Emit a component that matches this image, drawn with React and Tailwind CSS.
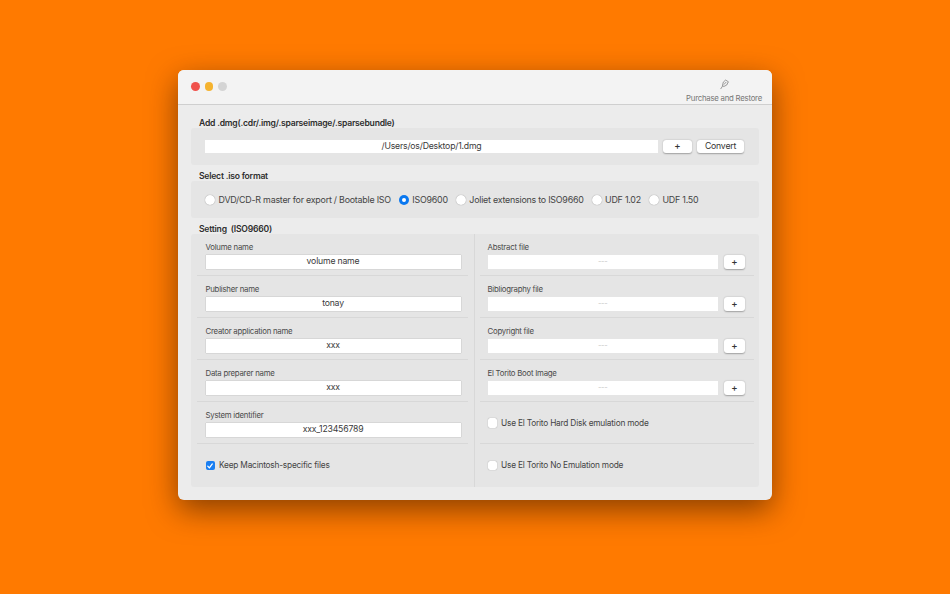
import React from "react";

const font = { fontFamily: '"Inter", "Liberation Sans", sans-serif' };

function Field({ value, placeholder, className = "" }) {
  return (
    <div className={`h-[13.5px] bg-white flex items-center justify-center text-[8.7px] tracking-[-0.2px] leading-none text-[#3a3a3a] ${className}`}>
      {placeholder ? <span className="text-[#c8c8c8] text-[7.5px]">{placeholder}</span> : value}
    </div>
  );
}

function PushButton({ label, className = "" }) {
  return (
    <div className={`h-[13.5px] bg-white rounded-[3px] shadow-[0_0.5px_1.5px_rgba(0,0,0,0.3)] flex items-center justify-center text-[8.7px] tracking-[-0.2px] leading-none text-[#333] ${className}`}>
      {label}
    </div>
  );
}

function PlusButton({ className = "" }) {
  return (
    <div className={`h-[13.5px] bg-white rounded-[3px] shadow-[0_0.5px_1.5px_rgba(0,0,0,0.3)] flex items-center justify-center pb-[1px] text-[9.5px] font-medium leading-none text-[#333] ${className}`}>
      +
    </div>
  );
}

function Radio({ label, checked }) {
  return (
    <div className="flex items-center gap-[3.5px]">
      {checked ? (
        <div className="w-[10px] h-[10px] rounded-full bg-[#0a78f0] flex items-center justify-center">
          <div className="w-[4px] h-[4px] rounded-full bg-white" />
        </div>
      ) : (
        <div className="w-[10px] h-[10px] rounded-full bg-white shadow-[0_0_1px_rgba(0,0,0,0.45)]" />
      )}
      <span className="text-[8.9px] tracking-[-0.23px] leading-none text-[#444] whitespace-nowrap">{label}</span>
    </div>
  );
}

function Check({ label, checked }) {
  return (
    <div className="flex items-center gap-[4px]">
      {checked ? (
        <div className="w-[9.5px] h-[9.5px] rounded-[2px] bg-[#1a7ff2] flex items-center justify-center">
          <svg viewBox="0 0 10 10" className="w-[8px] h-[8px]" fill="none" stroke="white" strokeWidth="1.6" strokeLinecap="round" strokeLinejoin="round">
            <path d="M2.2 5.2 L4.2 7.4 L7.9 2.4" />
          </svg>
        </div>
      ) : (
        <div className="w-[9.5px] h-[9.5px] rounded-[2px] bg-white shadow-[0_0_1px_rgba(0,0,0,0.45)]" />
      )}
      <span className="text-[8.3px] tracking-[-0.2px] leading-none text-[#444] whitespace-nowrap">{label}</span>
    </div>
  );
}

function LeftRow({ label, value }) {
  return (
    <div className="h-[42px] border-b border-[#d8d8d8] pl-[8.5px] pr-[7px] pt-[9px] flex flex-col gap-[3px]">
      <div className="text-[7.8px] tracking-[-0.24px] leading-[9px] h-[9px] text-[#4a4a4a]">{label}</div>
      <Field value={value} className="shadow-[0_0_1px_rgba(0,0,0,0.35)]" />
    </div>
  );
}

function RightRow({ label }) {
  return (
    <div className="h-[42px] border-b border-[#d8d8d8] pl-[8px] pt-[9px] flex flex-col gap-[3px]">
      <div className="text-[7.8px] tracking-[-0.24px] leading-[9px] h-[9px] text-[#4a4a4a]">{label}</div>
      <div className="flex items-center gap-[6px] pr-[9px]">
        <Field placeholder="---" className="flex-1" />
        <PlusButton className="w-[21px]" />
      </div>
    </div>
  );
}

function SectionTitle({ children }) {
  return <div className="pl-[8px] h-[12px] text-[8.6px] tracking-[-0.22px] leading-[14px] font-semibold text-[#2e2e2e] whitespace-nowrap">{children}</div>;
}

export default function App() {
  return (
    <div className="w-[950px] h-[594px] bg-[#ff7a00] overflow-hidden flex justify-center pt-[70px]" style={font}>
      <div className="w-[594px] h-[430px] rounded-[6px] bg-[#ececec] shadow-[0_10px_30px_rgba(60,25,0,0.6)] overflow-hidden flex flex-col">
        {/* title bar */}
        <div className="h-[35px] shrink-0 bg-[#f3f3f3] border-b border-[#cfcfcf] flex justify-between pl-[13px] pr-[10px]">
          <div className="flex items-center gap-[5px] pb-[1px]">
            <div className="w-[8.5px] h-[8.5px] rounded-full bg-[#f0524c]" />
            <div className="w-[8.5px] h-[8.5px] rounded-full bg-[#f5b32f]" />
            <div className="w-[8.5px] h-[8.5px] rounded-full bg-[#d4d4d4]" />
          </div>
          <div className="flex flex-col items-center pt-[8.5px]">
            <svg viewBox="0 0 12 12" className="w-[11px] h-[11px] text-[#666]" fill="none" stroke="currentColor" strokeWidth="0.7" strokeLinecap="round" strokeLinejoin="round">
              <path d="M7.6 1.4 L10.2 3 L8.4 6.6 L5.2 8.2 L3.8 7.2 L4.6 3.8 Z" />
              <path d="M4 7.6 L2 10.6" />
              <path d="M5.6 5.8 L7.6 3.6" />
            </svg>
            <div className="mt-[4px] text-[7.8px] tracking-[-0.24px] leading-[9px] text-[#777] whitespace-nowrap">Purchase and Restore</div>
          </div>
        </div>

        <div className="px-[13px] flex flex-col pt-[11px]">
          <SectionTitle>Add .dmg(.cdr/.img/.sparseimage/.sparsebundle)</SectionTitle>
          <div className="h-[37px] rounded-[3px] bg-[#e5e5e5] flex items-center pl-[14px]">
            <Field value="/Users/os/Desktop/1.dmg" className="w-[453px]" />
            <PlusButton className="w-[29px] ml-[5px]" />
            <PushButton label="Convert" className="w-[47px] ml-[5px]" />
          </div>

          <div className="mt-[4px]">
            <SectionTitle>Select .iso format</SectionTitle>
          </div>
          <div className="h-[37px] pt-[1px] rounded-[3px] bg-[#e5e5e5] flex items-center pl-[14px] gap-[8px]">
            <Radio label="DVD/CD-R master for export / Bootable ISO" />
            <Radio label="ISO9600" checked />
            <Radio label="Joliet extensions to ISO9660" />
            <Radio label="UDF 1.02" />
            <Radio label="UDF 1.50" />
          </div>

          <div className="mt-[4px]">
            <SectionTitle>Setting&nbsp;&nbsp;(ISO9660)</SectionTitle>
          </div>
          <div className="h-[253px] rounded-[3px] bg-[#e5e5e5] flex">
            <div className="w-[283.5px] border-r border-[#d8d8d8] flex flex-col px-[6px]">
              <LeftRow label="Volume name" value="volume name" />
              <LeftRow label="Publisher name" value="tonay" />
              <LeftRow label="Creator application name" value="xxx" />
              <LeftRow label="Data preparer name" value="xxx" />
              <LeftRow label="System identifier" value="xxx_123456789" />
              <div className="h-[43px] pl-[8.5px] flex items-center">
                <Check label="Keep Macintosh-specific files" checked />
              </div>
            </div>
            <div className="flex-1 flex flex-col px-[5px]">
              <RightRow label="Abstract file" />
              <RightRow label="Bibliography file" />
              <RightRow label="Copyright file" />
              <RightRow label="El Torito Boot Image" />
              <div className="h-[42px] pt-[1px] border-b border-[#d8d8d8] pl-[8px] flex items-center">
                <Check label="Use El Torito Hard Disk emulation mode" />
              </div>
              <div className="h-[43px] pl-[8px] flex items-center">
                <Check label="Use El Torito No Emulation mode" />
              </div>
            </div>
          </div>
        </div>
      </div>
    </div>
  );
}
